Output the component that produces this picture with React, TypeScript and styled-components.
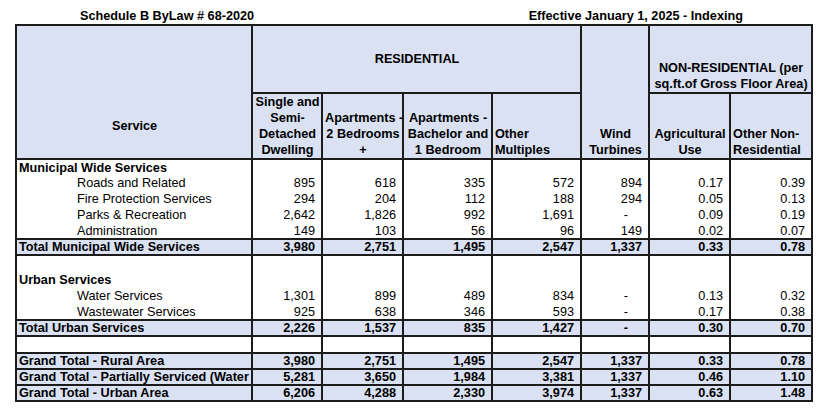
import React from "react";
import styled, { createGlobalStyle } from "styled-components";

const GlobalStyle = createGlobalStyle`
  html, body { margin: 0; padding: 0; background: #ffffff; }
  body { font-family: "Liberation Sans", Arial, sans-serif; color: #000; }
`;

const LINE = "#1c1c1c";
const FILL = "#d9e1f2";

const Page = styled.div`
  padding: 8px 0 0 15px;
  width: 796px;
`;

const TitleBar = styled.div`
  display: flex;
  justify-content: space-between;
  height: 16px;
  line-height: 16px;
  font-size: 12.7px;
  font-weight: bold;
  padding: 0 68px 0 65px;
`;

const Sheet = styled.table`
  border-collapse: collapse;
  table-layout: fixed;
  width: 796px;
  font-size: 12.7px;
`;

const HeadRow = styled.tr<{ $h: number }>`
  height: ${(p) => p.$h}px;
`;

const HeadCell = styled.th<{ $align?: "left" | "center"; $valign?: "top" | "middle" | "bottom"; $padBottom?: number }>`
  background: ${FILL};
  border: 2px solid ${LINE};
  font-weight: bold;
  line-height: 16px;
  text-align: ${(p) => p.$align ?? "center"};
  vertical-align: ${(p) => p.$valign ?? "bottom"};
  padding: 0 1px ${(p) => p.$padBottom ?? 0}px 2px;
  white-space: nowrap;
  overflow: visible;
`;

const BodyRow = styled.tr<{ $fill?: boolean; $ruled?: boolean; $h?: number }>`
  height: ${(p) => p.$h ?? 16}px;
  background: ${(p) => (p.$fill ? FILL : "#fff")};
  & > td {
    border-top: ${(p) => (p.$ruled ? `2px solid ${LINE}` : "none")};
    border-bottom: ${(p) => (p.$ruled ? `2px solid ${LINE}` : "none")};
  }
`;

const LabelCell = styled.td<{ $bold?: boolean; $indent?: boolean }>`
  border-left: 2px solid ${LINE};
  border-right: 2px solid ${LINE};
  padding: 0 0 0 ${(p) => (p.$indent ? 60 : 2)}px;
  font-weight: ${(p) => (p.$bold ? "bold" : "normal")};
  line-height: 14px;
  white-space: nowrap;
  overflow: hidden;
  vertical-align: middle;
`;

const NumCell = styled.td<{ $bold?: boolean; $dash?: boolean }>`
  border-left: 2px solid ${LINE};
  border-right: 2px solid ${LINE};
  padding: 0 ${(p) => (p.$dash ? 20 : 6)}px 0 0;
  text-align: right;
  font-weight: ${(p) => (p.$bold ? "bold" : "normal")};
  line-height: 14px;
  white-space: nowrap;
  vertical-align: middle;
`;

type Row = {
  label: string;
  values?: string[];
  kind: "group" | "item" | "total" | "blank" | "spacer";
  h?: number;
};

const rows: Row[] = [
  { label: "Municipal Wide Services", kind: "group" },
  { label: "Roads and Related", kind: "item", values: ["895", "618", "335", "572", "894", "0.17", "0.39"] },
  { label: "Fire Protection Services", kind: "item", values: ["294", "204", "112", "188", "294", "0.05", "0.13"] },
  { label: "Parks & Recreation", kind: "item", values: ["2,642", "1,826", "992", "1,691", "-", "0.09", "0.19"] },
  { label: "Administration", kind: "item", values: ["149", "103", "56", "96", "149", "0.02", "0.07"] },
  { label: "Total Municipal Wide Services", kind: "total", values: ["3,980", "2,751", "1,495", "2,547", "1,337", "0.33", "0.78"] },
  { label: "", kind: "spacer", h: 17 },
  { label: "Urban Services", kind: "group" },
  { label: "Water Services", kind: "item", values: ["1,301", "899", "489", "834", "-", "0.13", "0.32"] },
  { label: "Wastewater Services", kind: "item", values: ["925", "638", "346", "593", "-", "0.17", "0.38"] },
  { label: "Total Urban Services", kind: "total", values: ["2,226", "1,537", "835", "1,427", "-", "0.30", "0.70"] },
  { label: "", kind: "blank", h: 17 },
  { label: "Grand Total - Rural Area", kind: "total", values: ["3,980", "2,751", "1,495", "2,547", "1,337", "0.33", "0.78"] },
  { label: "Grand Total - Partially Serviced (Water", kind: "total", values: ["5,281", "3,650", "1,984", "3,381", "1,337", "0.46", "1.10"] },
  { label: "Grand Total - Urban Area", kind: "total", values: ["6,206", "4,288", "2,330", "3,974", "1,337", "0.63", "1.48"] },
];

const widths = [236, 70, 81, 89, 89, 68, 81, 82];

export default function App() {
  return (
    <>
      <GlobalStyle />
      <Page>
        <TitleBar>
          <span>Schedule B ByLaw # 68-2020</span>
          <span>Effective January 1, 2025 - Indexing</span>
        </TitleBar>
        <Sheet>
          <colgroup>
            {widths.map((w, i) => (
              <col key={i} style={{ width: w }} />
            ))}
          </colgroup>
          <thead>
            <HeadRow $h={68}>
              <HeadCell rowSpan={2} $padBottom={24}>Service</HeadCell>
              <HeadCell colSpan={4} $valign="middle">RESIDENTIAL</HeadCell>
              <HeadCell rowSpan={2}>
                Wind
                <br />
                Turbines
              </HeadCell>
              <HeadCell colSpan={2}>
                NON-RESIDENTIAL (per
                <br />
                sq.ft.of Gross Floor Area)
              </HeadCell>
            </HeadRow>
            <HeadRow $h={64}>
              <HeadCell>
                Single and
                <br />
                Semi-
                <br />
                Detached
                <br />
                Dwelling
              </HeadCell>
              <HeadCell>
                Apartments -
                <br />
                2 Bedrooms
                <br />+
              </HeadCell>
              <HeadCell>
                Apartments -
                <br />
                Bachelor and
                <br />1 Bedroom
              </HeadCell>
              <HeadCell $align="left">
                Other
                <br />
                Multiples
              </HeadCell>
              <HeadCell>
                Agricultural
                <br />
                Use
              </HeadCell>
              <HeadCell $align="left">
                Other Non-
                <br />
                Residential
              </HeadCell>
            </HeadRow>
          </thead>
          <tbody>
            {rows.map((r, i) => {
              const fill = r.kind === "total";
              const ruled = r.kind === "total" || r.kind === "blank";
              const bold = r.kind === "total" || r.kind === "group";
              const vals = r.values ?? ["", "", "", "", "", "", ""];
              return (
                <BodyRow key={i} $fill={fill} $ruled={ruled} $h={r.h}>
                  <LabelCell $bold={bold} $indent={r.kind === "item"}>
                    {r.label}
                  </LabelCell>
                  {vals.map((v, j) => (
                    <NumCell key={j} $bold={r.kind === "total"} $dash={v === "-"}>
                      {v}
                    </NumCell>
                  ))}
                </BodyRow>
              );
            })}
          </tbody>
        </Sheet>
      </Page>
    </>
  );
}
